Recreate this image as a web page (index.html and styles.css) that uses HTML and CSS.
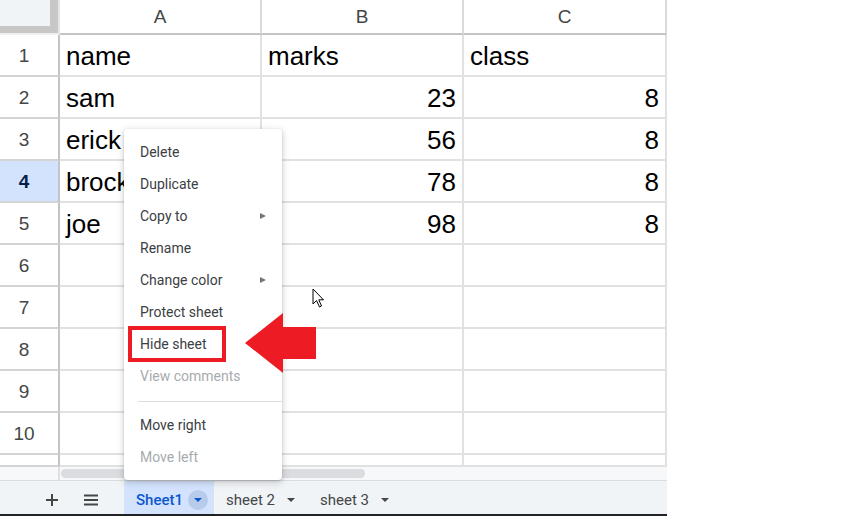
FILE: index.html
```html
<!DOCTYPE html>
<html>
<head>
<meta charset="utf-8">
<link rel="stylesheet" href="styles.css">
</head>
<body>
<div class="app">
  <div class="sheet">
    <div class="grid">
      <div class="corner"><div class="corner-in"></div></div>
      <div class="ch">A</div><div class="ch">B</div><div class="ch">C</div>

      <div class="rh">1</div><div class="cell">name</div><div class="cell">marks</div><div class="cell">class</div>
      <div class="rh">2</div><div class="cell">sam</div><div class="cell num">23</div><div class="cell num">8</div>
      <div class="rh">3</div><div class="cell">erick</div><div class="cell num">56</div><div class="cell num">8</div>
      <div class="rh sel">4</div><div class="cell">brock</div><div class="cell num">78</div><div class="cell num">8</div>
      <div class="rh">5</div><div class="cell">joe</div><div class="cell num">98</div><div class="cell num">8</div>
      <div class="rh">6</div><div class="cell"></div><div class="cell"></div><div class="cell"></div>
      <div class="rh">7</div><div class="cell"></div><div class="cell"></div><div class="cell"></div>
      <div class="rh">8</div><div class="cell"></div><div class="cell"></div><div class="cell"></div>
      <div class="rh">9</div><div class="cell"></div><div class="cell"></div><div class="cell"></div>
      <div class="rh">10</div><div class="cell"></div><div class="cell"></div><div class="cell"></div>
      <div class="rh part"></div><div class="cell part"></div><div class="cell part"></div><div class="cell part"></div>
    </div>
    <div class="hscroll">
      <div class="hscroll-left"></div>
      <div class="thumb"></div>
    </div>
    <div class="tabbar">
      <div class="tb-icon">
        <svg width="14" height="14" viewBox="0 0 14 14"><path d="M7 1v12M1 7h12" stroke="#444746" stroke-width="2" fill="none"/></svg>
      </div>
      <div class="tb-icon">
        <svg width="16" height="14" viewBox="0 0 16 14"><path d="M1 2.5h14M1 7h14M1 11.5h14" stroke="#444746" stroke-width="2" fill="none"/></svg>
      </div>
      <div class="tab active">
        <span class="tab-name">Sheet1</span>
        <span class="drop-circle"><span class="tri blue"></span></span>
      </div>
      <div class="tab">
        <span class="tab-name">sheet 2</span>
        <span class="tri"></span>
      </div>
      <div class="tab">
        <span class="tab-name">sheet 3</span>
        <span class="tri"></span>
      </div>
    </div>
  </div>

  <div class="menu">
    <div class="mi">Delete</div>
    <div class="mi">Duplicate</div>
    <div class="mi">Copy to <span class="sub"></span></div>
    <div class="mi">Rename</div>
    <div class="mi">Change color <span class="sub"></span></div>
    <div class="mi">Protect sheet</div>
    <div class="mi">Hide sheet</div>
    <div class="mi dis">View comments</div>
    <div class="sep"></div>
    <div class="mi">Move right</div>
    <div class="mi dis">Move left</div>
  </div>

  <div class="hl-box"></div>
  <svg class="red-arrow" width="74" height="62" viewBox="0 0 74 62">
    <polygon points="1,31 39,1 39,15 72,15 72,47 39,47 39,61" fill="#ed1c24"/>
  </svg>
  <svg class="cursor" width="14" height="21" viewBox="0 0 14 21">
    <path d="M1 1 L1 16 L4.5 12.5 L7.5 19 L9.5 18 L6.8 11.8 L11.5 11.8 Z" fill="#fff" stroke="#000" stroke-width="1" stroke-linejoin="miter"/>
  </svg>
</div>
</body>
</html>
```
FILE: styles.css
```css
html, body {
  margin: 0;
  padding: 0;
  background: #fff;
}

.app {
  position: relative;
  width: 868px;
  height: 516px;
  overflow: hidden;
  font-family: "Liberation Sans", Arial, sans-serif;
}

.sheet {
  width: 667px;
  display: flex;
  flex-direction: column;
}

.grid {
  display: grid;
  grid-template-columns: 60px 202px 202px 203px;
  grid-template-rows: 35px repeat(10, 42px) 12px;
}

.grid > div {
  box-sizing: border-box;
}

.corner {
  background: #c7c7c7;
  border-right: 2px solid #e6e6e6;
  border-bottom: 2px solid #f0f0f0;
}

.corner-in {
  width: 50px;
  height: 26px;
  background: #f1f4f6;
}

.ch {
  border-right: 2px solid #dadada;
  border-bottom: 2px solid #c4c4c4;
  font-size: 19px;
  color: #444746;
  text-align: center;
  line-height: 33px;
}

.rh {
  border-right: 2px solid #c4c4c4;
  border-bottom: 2px solid #d4d4d4;
  font-size: 19px;
  color: #444746;
  text-align: center;
  padding: 1px 10px 0 0;
  line-height: 39px;
}

.rh.sel {
  background: #d3e3fd;
  color: #041e49;
  font-weight: bold;
}

.cell {
  border-right: 2px solid #e1e1e1;
  border-bottom: 2px solid #e1e1e1;
  font-size: 26px;
  color: #000;
  line-height: 38px;
  padding: 2px 6px 0 6px;
  white-space: nowrap;
  overflow: hidden;
}

.cell.num {
  text-align: right;
}

.part {
  line-height: 10px;
}

.hscroll {
  height: 13px;
  display: flex;
  align-items: center;
  background: #f6f8f9;
}

.hscroll-left {
  width: 60px;
  height: 13px;
  box-sizing: border-box;
  border-right: 2px solid #e0e0e0;
}

.thumb {
  width: 304px;
  height: 9px;
  margin-left: 1px;
  border-radius: 5px;
  background: #dadce0;
}

.tabbar {
  height: 33px;
  border-top: 1px solid #dadce0;
  border-bottom: 2px solid #202124;
  background: #f1f4f6;
  display: flex;
  align-items: stretch;
  font-family: Roboto, "Liberation Sans", sans-serif;
  font-size: 15px;
  color: #444746;
}

.tb-icon {
  width: 24px;
  display: flex;
  align-items: center;
  justify-content: center;
  padding-top: 4px;
}

.tb-icon:first-child {
  margin-left: 40px;
}

.tb-icon + .tb-icon {
  margin-left: 15px;
}

.tab {
  display: flex;
  align-items: center;
  padding: 4px 13px 0 12px;
}

.tab.active {
  margin-left: 21px;
  padding-right: 6px;
  background: #d3e3fd;
  color: #0b57d0;
  font-weight: 500;
}

.tab-name {
  white-space: nowrap;
}

.drop-circle {
  width: 20px;
  height: 20px;
  margin-left: 5px;
  border-radius: 50%;
  background: #b9cbeb;
  display: flex;
  align-items: center;
  justify-content: center;
}

.tri {
  width: 0;
  height: 0;
  border-left: 4px solid transparent;
  border-right: 4px solid transparent;
  border-top: 4px solid #444746;
  margin-left: 12px;
}

.drop-circle .tri {
  margin-left: 0;
}

.tri.blue {
  border-top-color: #0b57d0;
}

.menu {
  position: absolute;
  left: 124px;
  top: 129px;
  width: 158px;
  box-sizing: border-box;
  padding: 7px 0;
  background: #fff;
  border-radius: 4px;
  box-shadow: 0 2px 6px 1px rgba(60, 64, 67, 0.22), 0 1px 2px rgba(60, 64, 67, 0.2);
  font-family: Roboto, "Liberation Sans", sans-serif;
  font-size: 14px;
  color: #3c4043;
}

.mi {
  height: 32px;
  line-height: 32px;
  padding: 0 16px;
  display: flex;
  align-items: center;
  justify-content: space-between;
  white-space: nowrap;
}

.mi.dis {
  color: #a8abae;
}

.sub {
  width: 0;
  height: 0;
  border-top: 3.5px solid transparent;
  border-bottom: 3.5px solid transparent;
  border-left: 6px solid #757575;
}

.sep {
  height: 1px;
  margin: 9px 0 7px 14px;
  background: #dadce0;
}

.hl-box {
  position: absolute;
  left: 128px;
  top: 326px;
  width: 98px;
  height: 36px;
  box-sizing: border-box;
  border: 4px solid #ed1c24;
}

.red-arrow {
  position: absolute;
  left: 244px;
  top: 312px;
}

.cursor {
  position: absolute;
  left: 312px;
  top: 288px;
}
```
